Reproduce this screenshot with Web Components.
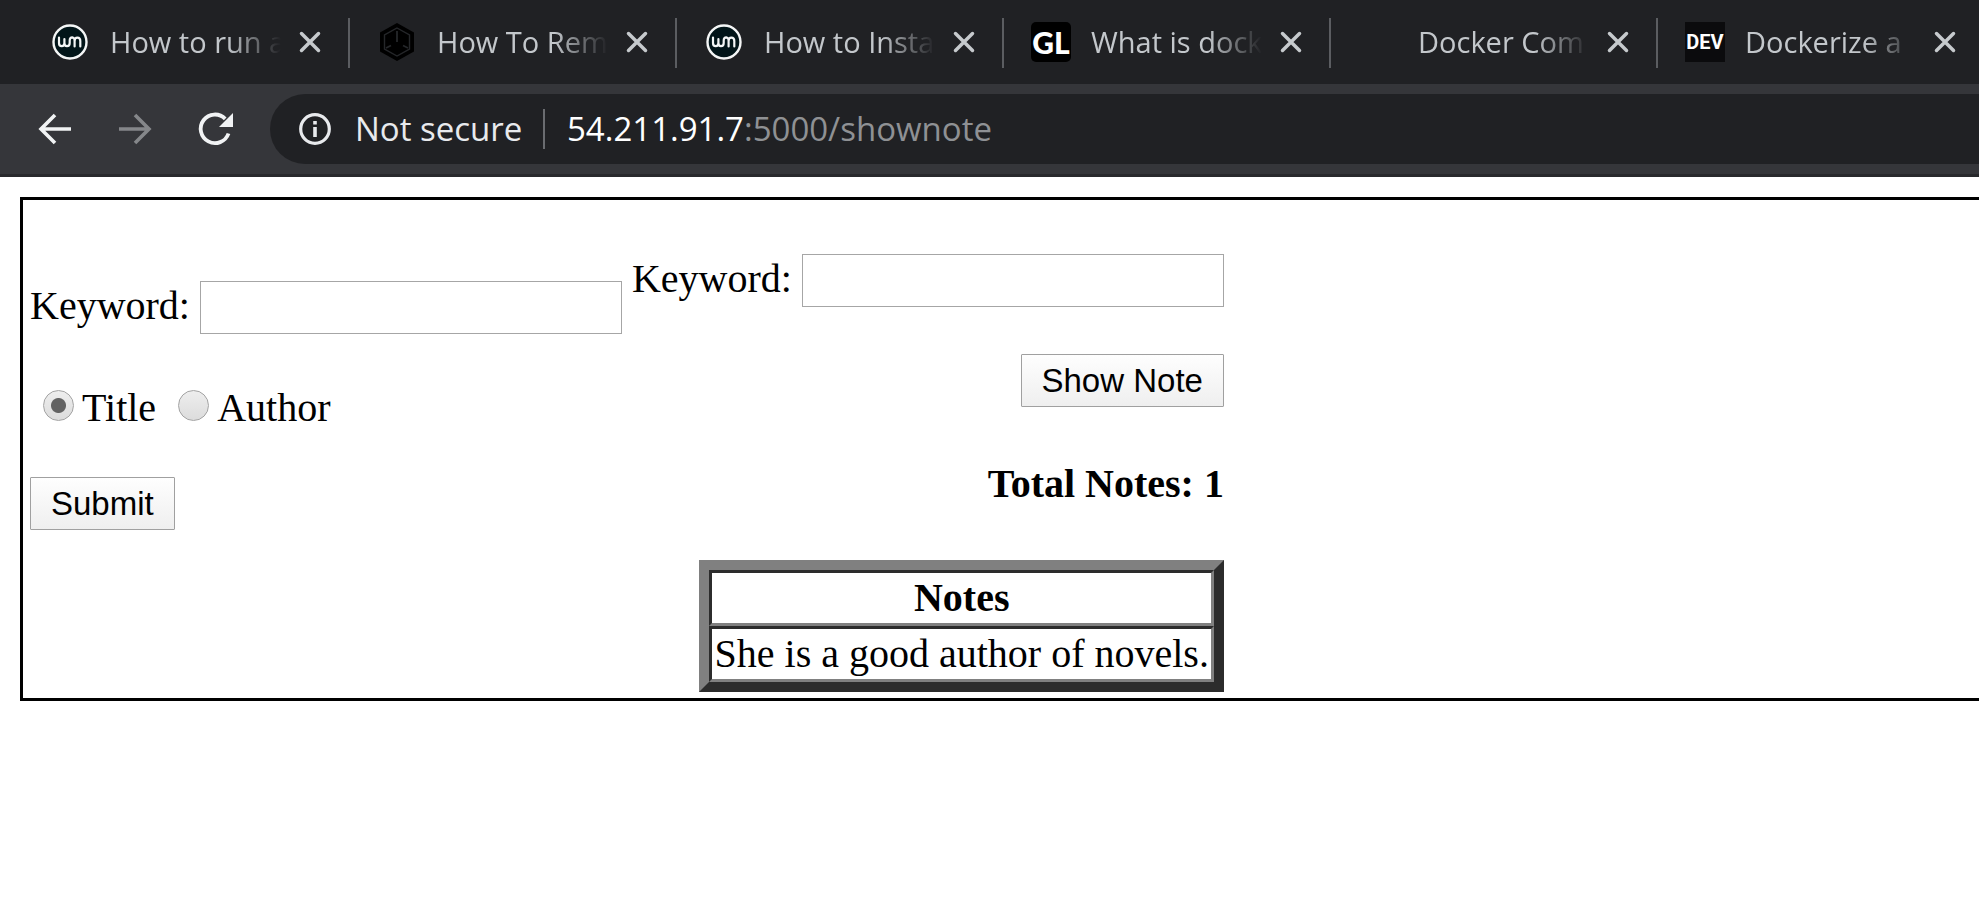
<!DOCTYPE html>
<html lang="en">
<head>
<meta charset="utf-8">
<title>Show note</title>
<style>
  html, body { margin: 0; background: #fff; }
  body { overflow-x: hidden; font-family: "Liberation Serif", serif; }
</style>
</head>
<body>
<tab-strip>
  <browser-tab label="How to run a">
    <wm-icon slot="icon"></wm-icon>
  </browser-tab>
  <browser-tab label="How To Rem">
    <hex-icon slot="icon"></hex-icon>
  </browser-tab>
  <browser-tab label="How to Insta">
    <wm-icon slot="icon"></wm-icon>
  </browser-tab>
  <browser-tab label="What is dock">
    <text-icon slot="icon" class="gl">GL</text-icon>
  </browser-tab>
  <browser-tab label="Docker Com"></browser-tab>
  <browser-tab label="Dockerize a">
    <text-icon slot="icon" class="dev">DEV</text-icon>
  </browser-tab>
</tab-strip>
<address-bar></address-bar>
<note-panel>
  <search-form slot="search"></search-form>
  <show-form slot="show">
    <notes-table></notes-table>
  </show-form>
</note-panel>

<script>
const define = (name, html) => {
  const template = document.createElement('template');
  template.innerHTML = html;
  customElements.define(name, class extends HTMLElement {
    constructor() {
      super();
      this.attachShadow({ mode: 'open' }).append(template.content.cloneNode(true));
    }
    connectedCallback() {
      for (const node of this.shadowRoot.querySelectorAll('[data-label]')) {
        node.textContent = this.getAttribute('label');
      }
    }
  });
};

const controls = `
  .button {
    box-sizing: border-box; height: 53px; margin: 0; padding: 0 20px;
    border: 1px solid #a0a0a0; border-radius: 1px; color: #000;
    background: linear-gradient(#fefefe, #efefef);
    font: 33px/50px "Liberation Sans", Arial, sans-serif; white-space: nowrap;
  }`;

define('tab-strip', `
  <style>
    :host { display: flex; height: 84px; padding-left: 23px; overflow: hidden; background: #202124; }
  </style>
  <slot></slot>`);

define('browser-tab', `
  <style>
    :host {
      display: flex; flex: 0 0 327px; box-sizing: border-box; align-items: center;
      padding: 0 27px; position: relative;
      font-family: "Open Sans", "Noto Sans", sans-serif;
    }
    .icon { flex: none; display: flex; justify-content: center; width: 40px; }
    .title {
      flex: none; width: 178px; margin-left: 20px; overflow: hidden;
      color: #c3c7cb; font-size: 29px; line-height: 40px; white-space: nowrap;
      -webkit-mask-image: linear-gradient(90deg, #000 66%, transparent 96%);
      mask-image: linear-gradient(90deg, #000 66%, transparent 96%);
    }
    button { flex: none; width: 24px; height: 24px; margin-left: 10px; padding: 0; border: 0; background: none; }
    svg { display: block; }
    .line { position: absolute; right: 0; top: 18px; width: 2px; height: 50px; background: #5b5d61; }
  </style>
  <span class="icon"><slot name="icon"></slot></span>
  <span class="title" data-label></span>
  <button type="button" aria-label="Close tab">
    <svg width="24" height="24" viewBox="0 0 24 24"><path d="M3.500 3.500L20.500 20.500M20.500 3.500L3.500 20.500" stroke="#c6cacd" stroke-width="3.500" stroke-linecap="round"/></svg>
  </button>
  <span class="line"></span>`);

define('wm-icon', `
  <style>:host { display: block; } svg { display: block; }</style>
  <svg width="36" height="36" viewBox="0 0 36 36" fill="none">
    <circle cx="18" cy="18" r="16.500" fill="#021519" stroke="#f4f6f6" stroke-width="2.400"/>
    <path d="M7 13.500v5.500c0 2 1 3.200 2.700 3.200s2.700-1.200 2.700-3.200v-4m0 4c0 2 .9 3.200 2.600 3.200s2.700-1.200 2.700-3.200v-2.200c0-2.200.8-3.400 2.600-3.400M22.600 22.500v-5.500c0-2 1-3.400 2.800-3.400s2.900 1.300 2.900 3.400v5.500M22.600 17c0-2.200-.8-3.400-2.300-3.400" stroke="#f4f6f6" stroke-width="2.200" stroke-linecap="round" stroke-linejoin="round"/>
  </svg>`);

define('hex-icon', `
  <style>:host { display: block; } svg { display: block; }</style>
  <svg width="36" height="40" viewBox="0 0 36 40" fill="none">
    <path d="M18 1L35 10.500V29.500L18 39L1 29.500V10.500Z" fill="#000"/>
    <path d="M18 6L30.500 13V27L18 34L5.500 27V13Z" stroke="#25272a" stroke-width="1.400"/>
    <path d="M18 9V20M7 26l5-2.500M29 26l-5-2.500" stroke="#25272a" stroke-width="1.800"/>
  </svg>`);

define('text-icon', `
  <style>
    :host {
      display: block; width: 40px; height: 40px; overflow: hidden; background: #000; color: #fff;
      text-align: center; white-space: nowrap;
    }
    :host(.gl) { border-radius: 5px; font: 900 30px/40px Lato, sans-serif; }
    :host(.dev) { background: #0b0b0d; font: 700 20px/40px Roboto, sans-serif; }
  </style>
  <slot></slot>`);

define('address-bar', `
  <style>
    :host {
      display: flex; align-items: center; height: 90px; padding-left: 35px;
      background: #35363a; border-bottom: 3px solid #28292c;
      font-family: "Open Sans", "Noto Sans", sans-serif; font-size: 33px; line-height: 46px;
    }
    button { flex: none; width: 40px; height: 40px; margin-right: 40px; padding: 0; border: 0; background: none; }
    svg { display: block; flex: none; }
    .box {
      flex: 1; display: flex; align-items: center; box-sizing: border-box; height: 70px;
      margin-left: -5px; padding-left: 29px; border-radius: 35px 0 0 35px;
      background: #202124; color: #e8eaed; white-space: nowrap;
    }
    .state { margin-left: 24px; width: 168px; }
    .line { width: 2px; height: 40px; margin: 0 22px 0 20px; background: #6a6c70; }
    .url { color: #8f9194; }
    b { font-weight: 400; color: #fff; }
  </style>
  <button type="button" aria-label="Back">
    <svg width="40" height="40" viewBox="0 0 40 40" fill="none"><path d="M20 6L6 20L20 34M6 20H36" stroke="#f1f3f4" stroke-width="3.600"/></svg>
  </button>
  <button type="button" aria-label="Forward">
    <svg width="40" height="40" viewBox="0 0 40 40" fill="none"><path d="M20 6L34 20L20 34M34 20H4" stroke="#85878a" stroke-width="3.600"/></svg>
  </button>
  <button type="button" aria-label="Reload">
    <svg width="40" height="40" viewBox="0 0 40 40" fill="none"><path d="M33.500 24.500A14.300 14.300 0 1 1 30.200 9.800" stroke="#f1f3f4" stroke-width="3.800"/><path d="M38 4V18H24Z" fill="#f1f3f4"/></svg>
  </button>
  <div class="box">
    <svg width="32" height="32" viewBox="0 0 32 32" fill="none"><circle cx="16" cy="16" r="14.300" stroke="#e8eaed" stroke-width="3.200"/><path d="M16 14V24M16 8V11.500" stroke="#e8eaed" stroke-width="3.600"/></svg>
    <span class="state">Not secure</span>
    <span class="line"></span>
    <span class="url"><b>54.211.91.7</b>:5000/shownote</span>
  </div>`);

define('note-panel', `
  <style>
    :host {
      display: flex; align-items: flex-start; gap: 10px; margin: 20px 0 20px 20px; padding: 0 7px 6px;
      border: solid #000; border-width: 3px 0 3px 3px;
      color: #000; font-size: 40px; line-height: 46px;
    }
  </style>
  <slot name="search"></slot>
  <slot name="show"></slot>`);

define('keyword-field', `
  <style>
    :host { display: flex; align-items: baseline; gap: 10px; }
    input {
      box-sizing: border-box; width: 422px; height: 53px; margin: 0; padding: 2px;
      border: 1px solid #a6a6a6; border-radius: 0; background: #fff;
      font: 33px "Liberation Sans", Arial, sans-serif;
    }
  </style>
  <label for="keyword">Keyword:</label>
  <input id="keyword" type="text">`);

define('search-form', `
  <style>
    :host { display: block; padding-top: 81px; }
    form { display: flex; flex-direction: column; align-items: flex-start; margin: 0; }
    .choice { display: flex; align-items: baseline; margin: 50px 0 46px; }
    input {
      appearance: none; box-sizing: border-box; width: 31px; height: 31px; margin: 0 8px 4px 13px;
      border: 1px solid #a3a3a3; border-radius: 50%;
      background: linear-gradient(#eee, #dcdcdc);
    }
    input:checked { background: radial-gradient(circle, #636363 7px, transparent 8px), linear-gradient(#eee, #dcdcdc); }
    label + input { margin-left: 22px; }
    label { line-height: 47px; }
    ${controls}
  </style>
  <form>
    <keyword-field></keyword-field>
    <div class="choice">
      <input id="title" type="radio" name="by" checked><label for="title">Title</label>
      <input id="author" type="radio" name="by"><label for="author">Author</label>
    </div>
    <button class="button" type="button">Submit</button>
  </form>`);

define('show-form', `
  <style>
    :host { display: block; padding-top: 54px; }
    form { display: flex; flex-direction: column; align-items: flex-end; margin: 0; }
    ${controls}
    .button { margin: 47px 0 54px; }
    .total { margin: 0 0 53px; font-weight: 700; }
  </style>
  <form>
    <keyword-field></keyword-field>
    <button class="button" type="button">Show Note</button>
    <p class="total">Total Notes: 1</p>
    <slot></slot>
  </form>`);

define('notes-table', `
  <style>
    :host { display: block; }
    table {
      border: 10px solid; border-color: #808080 #2c2c2c #2c2c2c #808080;
      border-spacing: 0; border-collapse: separate;
    }
    th, td {
      height: 46px; padding: 2px 2px 2px 3px; white-space: nowrap;
      border: 3px solid; border-color: #2c2c2c #808080 #808080 #2c2c2c;
    }
  </style>
  <table>
    <thead><tr><th>Notes</th></tr></thead>
    <tbody><tr><td>She is a good author of novels.</td></tr></tbody>
  </table>`);
</script>
</body>
</html>
